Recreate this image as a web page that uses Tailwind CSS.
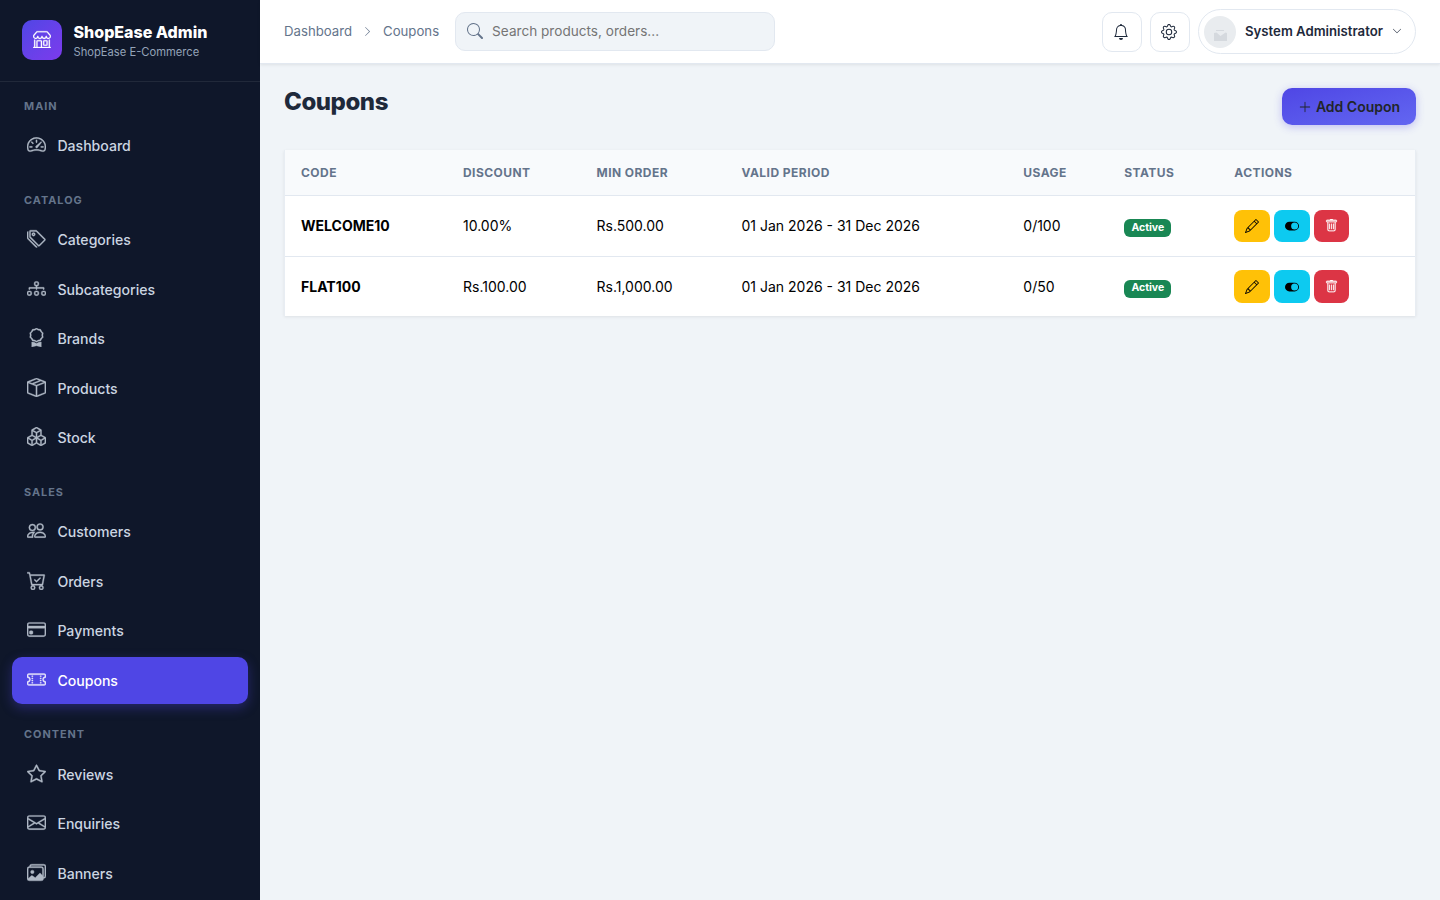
<!DOCTYPE html>
<html lang="en">

<head>
    <meta charset="UTF-8" />
    <meta name="viewport" content="width=device-width, initial-scale=1.0" />
    <title>Coupons - ShopEase Admin</title>
    <script src="https://cdn.jsdelivr.net/npm/@tailwindcss/browser@4"></script>
</head>

<body class="font-['Inter',sans-serif] bg-[#f0f4f8] h-screen overflow-hidden">
    <!-- Icon sprite -->
    <svg class="hidden" xmlns="http://www.w3.org/2000/svg">
        <symbol id="shop" viewBox="0 0 16 16"><path d="M2.97 1.35A1 1 0 0 1 3.73 1h8.54a1 1 0 0 1 .76.35l2.609 3.044A1.5 1.5 0 0 1 16 5.37v.255a2.375 2.375 0 0 1-4.25 1.458A2.37 2.37 0 0 1 9.875 8 2.37 2.37 0 0 1 8 7.083 2.37 2.37 0 0 1 6.125 8a2.37 2.37 0 0 1-1.875-.917A2.375 2.375 0 0 1 0 5.625V5.37a1.5 1.5 0 0 1 .361-.976zm1.78 4.275a1.375 1.375 0 0 0 2.75 0 .5.5 0 0 1 1 0 1.375 1.375 0 0 0 2.75 0 .5.5 0 0 1 1 0 1.375 1.375 0 1 0 2.75 0V5.37a.5.5 0 0 0-.12-.325L12.27 2H3.73L1.12 5.045A.5.5 0 0 0 1 5.37v.255a1.375 1.375 0 0 0 2.75 0 .5.5 0 0 1 1 0M1.5 8.5A.5.5 0 0 1 2 9v6h1v-5a1 1 0 0 1 1-1h3a1 1 0 0 1 1 1v5h6V9a.5.5 0 0 1 1 0v6h.5a.5.5 0 0 1 0 1H.5a.5.5 0 0 1 0-1H1V9a.5.5 0 0 1 .5-.5M4 15h3v-5H4zm5-5a1 1 0 0 1 1-1h2a1 1 0 0 1 1 1v3a1 1 0 0 1-1 1h-2a1 1 0 0 1-1-1zm3 0h-2v3h2z" /></symbol>
        <symbol id="speedometer" viewBox="0 0 16 16"><path d="M8 4a.5.5 0 0 1 .5.5V6a.5.5 0 0 1-1 0V4.5A.5.5 0 0 1 8 4M3.732 5.732a.5.5 0 0 1 .707 0l.915.914a.5.5 0 1 1-.708.708l-.914-.915a.5.5 0 0 1 0-.707M2 10a.5.5 0 0 1 .5-.5h1.586a.5.5 0 0 1 0 1H2.5A.5.5 0 0 1 2 10m9.5 0a.5.5 0 0 1 .5-.5h1.5a.5.5 0 0 1 0 1H12a.5.5 0 0 1-.5-.5m.754-4.246a.39.39 0 0 0-.527-.02L7.547 9.31a.91.91 0 1 0 1.302 1.258l3.434-4.297a.39.39 0 0 0-.029-.518z" /><path fill-rule="evenodd" d="M0 10a8 8 0 1 1 15.547 2.661c-.442 1.253-1.845 1.602-2.932 1.25C11.309 13.488 9.475 13 8 13c-1.474 0-3.31.488-4.615.911-1.087.352-2.49.003-2.932-1.25A8 8 0 0 1 0 10m8-7a7 7 0 0 0-6.603 9.329c.203.575.923.876 1.68.63C4.397 12.533 6.358 12 8 12s3.604.532 4.923.96c.757.245 1.477-.056 1.68-.631A7 7 0 0 0 8 3" /></symbol>
        <symbol id="tags" viewBox="0 0 16 16"><path d="M3 2v4.586l7 7L14.586 9l-7-7zM2 2a1 1 0 0 1 1-1h4.586a1 1 0 0 1 .707.293l7 7a1 1 0 0 1 0 1.414l-4.586 4.586a1 1 0 0 1-1.414 0l-7-7A1 1 0 0 1 2 6.586z" /><path d="M5.5 5a.5.5 0 1 1 0-1 .5.5 0 0 1 0 1m0 1a1.5 1.5 0 1 0 0-3 1.5 1.5 0 0 0 0 3M1 7.086a1 1 0 0 0 .293.707L8.75 15.25l-.043.043a1 1 0 0 1-1.414 0l-7-7A1 1 0 0 1 0 7.586V3a1 1 0 0 1 1-1z" /></symbol>
        <symbol id="diagram" viewBox="0 0 16 16"><path fill-rule="evenodd" d="M6 3.5A1.5 1.5 0 0 1 7.5 2h1A1.5 1.5 0 0 1 10 3.5v1A1.5 1.5 0 0 1 8.5 6v1H14a.5.5 0 0 1 .5.5v1a.5.5 0 0 1-1 0V8h-5v.5a.5.5 0 0 1-1 0V8h-5v.5a.5.5 0 0 1-1 0v-1A.5.5 0 0 1 2 7h5.5V6A1.5 1.5 0 0 1 6 4.5zM8.5 5a.5.5 0 0 0 .5-.5v-1a.5.5 0 0 0-.5-.5h-1a.5.5 0 0 0-.5.5v1a.5.5 0 0 0 .5.5zM0 11.5A1.5 1.5 0 0 1 1.5 10h1A1.5 1.5 0 0 1 4 11.5v1A1.5 1.5 0 0 1 2.5 14h-1A1.5 1.5 0 0 1 0 12.5zm1.5-.5a.5.5 0 0 0-.5.5v1a.5.5 0 0 0 .5.5h1a.5.5 0 0 0 .5-.5v-1a.5.5 0 0 0-.5-.5zm4.5.5A1.5 1.5 0 0 1 7.5 10h1a1.5 1.5 0 0 1 1.5 1.5v1A1.5 1.5 0 0 1 8.5 14h-1A1.5 1.5 0 0 1 6 12.5zm1.5-.5a.5.5 0 0 0-.5.5v1a.5.5 0 0 0 .5.5h1a.5.5 0 0 0 .5-.5v-1a.5.5 0 0 0-.5-.5zm4.5.5a1.5 1.5 0 0 1 1.5-1.5h1a1.5 1.5 0 0 1 1.5 1.5v1a1.5 1.5 0 0 1-1.5 1.5h-1a1.5 1.5 0 0 1-1.5-1.5zm1.5-.5a.5.5 0 0 0-.5.5v1a.5.5 0 0 0 .5.5h1a.5.5 0 0 0 .5-.5v-1a.5.5 0 0 0-.5-.5z" /></symbol>
        <symbol id="award" viewBox="0 0 16 16"><path d="M9.669.864 8 0 6.331.864l-1.858.282-.842 1.68-1.337 1.32L2.6 6l-.306 1.854 1.337 1.32.842 1.68 1.858.282L8 12l1.669-.864 1.858-.282.842-1.68 1.337-1.32L13.4 6l.306-1.854-1.337-1.32-.842-1.68zm1.196 1.193.684 1.365 1.086 1.072L12.387 6l.248 1.506-1.086 1.072-.684 1.365-1.51.229L8 10.874l-1.355-.702-1.51-.229-.684-1.365-1.086-1.072L3.614 6l-.25-1.506 1.087-1.072.684-1.365 1.51-.229L8 1.126l1.356.702z" /><path d="M4 11.794V16l4-1 4 1v-4.206l-2.018.306L8 13.126 6.018 12.1z" /></symbol>
        <symbol id="box" viewBox="0 0 16 16"><path d="M8.186 1.113a.5.5 0 0 0-.372 0L1.846 3.5l2.404.961L10.404 2zm3.564 1.426L5.596 5 8 5.961 14.154 3.5zm3.25 1.7-6.5 2.6v7.922l6.5-2.6V4.24zM7.5 14.762V6.838L1 4.239v7.923zM7.443.184a1.5 1.5 0 0 1 1.114 0l7.129 2.852A.5.5 0 0 1 16 3.5v8.662a1 1 0 0 1-.629.928l-7.185 2.874a.5.5 0 0 1-.372 0L.63 13.09a1 1 0 0 1-.63-.928V3.5a.5.5 0 0 1 .314-.464z" /></symbol>
        <symbol id="boxes" viewBox="0 0 16 16"><path d="M7.752.066a.5.5 0 0 1 .496 0l3.75 2.143a.5.5 0 0 1 .252.434v3.995l3.498 2A.5.5 0 0 1 16 9.07v4.286a.5.5 0 0 1-.252.434l-3.75 2.143a.5.5 0 0 1-.496 0l-3.502-2-3.502 2.001a.5.5 0 0 1-.496 0l-3.75-2.143A.5.5 0 0 1 0 13.357V9.071a.5.5 0 0 1 .252-.434L3.75 6.638V2.643a.5.5 0 0 1 .252-.434zM4.25 7.504 1.508 9.071l2.742 1.567 2.742-1.567zM7.5 9.933l-2.75 1.571v3.134l2.75-1.571zm1 3.134 2.75 1.571v-3.134L8.5 9.933zm.508-3.996 2.742 1.567 2.742-1.567-2.742-1.567zm2.242-2.433V3.504L8.5 5.076V8.21zM7.5 8.21V5.076L4.75 3.504v3.134zM5.258 2.643 8 4.21l2.742-1.567L8 1.076zM15 9.933l-2.75 1.571v3.134L15 13.067zM3.75 14.638v-3.134L1 9.933v3.134z" /></symbol>
        <symbol id="people" viewBox="0 0 16 16"><path d="M15 14s1 0 1-1-1-4-5-4-5 3-5 4 1 1 1 1zm-7.978-1L7 12.996c.001-.264.167-1.03.76-1.72C8.312 10.629 9.282 10 11 10c1.717 0 2.687.63 3.24 1.276.593.69.758 1.457.76 1.72l-.008.002-.014.002zM11 7a2 2 0 1 0 0-4 2 2 0 0 0 0 4m3-2a3 3 0 1 1-6 0 3 3 0 0 1 6 0M6.936 9.28a6 6 0 0 0-1.23-.247A7 7 0 0 0 5 9c-4 0-5 3-5 4q0 1 1 1h4.216A2.24 2.24 0 0 1 5 13c0-1.01.377-2.042 1.09-2.904.243-.294.526-.569.846-.816M4.92 10A5.5 5.5 0 0 0 4 13H1c0-.26.164-1.03.76-1.724.545-.636 1.492-1.256 3.16-1.275ZM1.5 5.5a3 3 0 1 1 6 0 3 3 0 0 1-6 0m3-2a2 2 0 1 0 0 4 2 2 0 0 0 0-4" /></symbol>
        <symbol id="cart" viewBox="0 0 16 16"><path d="M11.354 6.354a.5.5 0 0 0-.708-.708L8 8.293 6.854 7.146a.5.5 0 1 0-.708.708l1.5 1.5a.5.5 0 0 0 .708 0z" /><path d="M.5 1a.5.5 0 0 0 0 1h1.11l.401 1.607 1.498 7.985A.5.5 0 0 0 4 12h1a2 2 0 1 0 0 4 2 2 0 0 0 0-4h7a2 2 0 1 0 0 4 2 2 0 0 0 0-4h1a.5.5 0 0 0 .491-.408l1.5-8A.5.5 0 0 0 14.5 3H2.89l-.405-1.621A.5.5 0 0 0 2 1zm3.915 10L3.102 4h10.796l-1.313 7zM6 14a1 1 0 1 1-2 0 1 1 0 0 1 2 0m7 0a1 1 0 1 1-2 0 1 1 0 0 1 2 0" /></symbol>
        <symbol id="card" viewBox="0 0 16 16"><path d="M0 4a2 2 0 0 1 2-2h12a2 2 0 0 1 2 2v8a2 2 0 0 1-2 2H2a2 2 0 0 1-2-2zm2-1a1 1 0 0 0-1 1v1h14V4a1 1 0 0 0-1-1zm13 4H1v5a1 1 0 0 0 1 1h12a1 1 0 0 0 1-1z" /><path d="M2 10a1 1 0 0 1 1-1h1a1 1 0 0 1 1 1v1a1 1 0 0 1-1 1H3a1 1 0 0 1-1-1z" /></symbol>
        <symbol id="ticket" viewBox="0 0 16 16"><path d="M4 4.85v.9h1v-.9zm7 0v.9h1v-.9zm-7 1.8v.9h1v-.9zm7 0v.9h1v-.9zm-7 1.8v.9h1v-.9zm7 0v.9h1v-.9zm-7 1.8v.9h1v-.9zm7 0v.9h1v-.9z" /><path d="M1.5 3A1.5 1.5 0 0 0 0 4.5V6a.5.5 0 0 0 .5.5 1.5 1.5 0 1 1 0 3 .5.5 0 0 0-.5.5v1.5A1.5 1.5 0 0 0 1.5 13h13a1.5 1.5 0 0 0 1.5-1.5V10a.5.5 0 0 0-.5-.5 1.5 1.5 0 0 1 0-3A.5.5 0 0 0 16 6V4.5A1.5 1.5 0 0 0 14.5 3zM1 4.5a.5.5 0 0 1 .5-.5h13a.5.5 0 0 1 .5.5v1.05a2.5 2.5 0 0 0 0 4.9v1.05a.5.5 0 0 1-.5.5h-13a.5.5 0 0 1-.5-.5v-1.05a2.5 2.5 0 0 0 0-4.9z" /></symbol>
        <symbol id="star" viewBox="0 0 16 16"><path d="M2.866 14.85c-.078.444.36.791.746.593l4.39-2.256 4.389 2.256c.386.198.824-.149.746-.592l-.83-4.73 3.522-3.356c.33-.314.16-.888-.282-.95l-4.898-.696L8.465.792a.513.513 0 0 0-.927 0L5.354 5.12l-4.898.696c-.441.062-.612.636-.283.95l3.523 3.356-.83 4.73zm4.905-2.767-3.686 1.894.694-3.957a.56.56 0 0 0-.163-.505L1.71 6.745l4.052-.576a.53.53 0 0 0 .393-.288L8 2.223l1.847 3.658a.53.53 0 0 0 .393.288l4.052.575-2.906 2.77a.56.56 0 0 0-.163.506l.694 3.957-3.686-1.894a.5.5 0 0 0-.461 0z" /></symbol>
        <symbol id="envelope" viewBox="0 0 16 16"><path d="M0 4a2 2 0 0 1 2-2h12a2 2 0 0 1 2 2v8a2 2 0 0 1-2 2H2a2 2 0 0 1-2-2zm2-1a1 1 0 0 0-1 1v.217l7 4.2 7-4.2V4a1 1 0 0 0-1-1zm13 2.383-4.708 2.825L15 11.105zm-.034 6.876-5.64-3.471L8 9.583l-1.326-.795-5.64 3.47A1 1 0 0 0 2 13h12a1 1 0 0 0 .966-.741M1 11.105l4.708-2.897L1 5.383z" /></symbol>
        <symbol id="images" viewBox="0 0 16 16"><path d="M4.502 9a1.5 1.5 0 1 0 0-3 1.5 1.5 0 0 0 0 3" /><path d="M14.002 13a2 2 0 0 1-2 2h-10a2 2 0 0 1-2-2V5A2 2 0 0 1 2 3a2 2 0 0 1 2-2h10a2 2 0 0 1 2 2v8a2 2 0 0 1-1.998 2M14 2H4a1 1 0 0 0-1 1h9.002a2 2 0 0 1 2 2v7A1 1 0 0 0 15 11V3a1 1 0 0 0-1-1M2.002 4a1 1 0 0 0-1 1v8l2.646-2.354a.5.5 0 0 1 .63-.062l2.66 1.773 3.71-3.71a.5.5 0 0 1 .577-.094l1.777 1.947V5a1 1 0 0 0-1-1z" /></symbol>
        <symbol id="search" viewBox="0 0 16 16"><path d="M11.742 10.344a6.5 6.5 0 1 0-1.397 1.398h-.001q.044.06.098.115l3.85 3.85a1 1 0 0 0 1.415-1.414l-3.85-3.85a1 1 0 0 0-.115-.1zM12 6.5a5.5 5.5 0 1 1-11 0 5.5 5.5 0 0 1 11 0" /></symbol>
        <symbol id="bell" viewBox="0 0 16 16"><path d="M8 16a2 2 0 0 0 2-2H6a2 2 0 0 0 2 2M8 1.918l-.797.161A4 4 0 0 0 4 6c0 .628-.134 2.197-.459 3.742-.16.767-.376 1.566-.663 2.258h10.244c-.287-.692-.502-1.49-.663-2.258C12.134 8.197 12 6.628 12 6a4 4 0 0 0-3.203-3.92zM14.22 12c.223.447.481.801.78 1H1c.299-.199.557-.553.78-1C2.68 10.2 3 6.88 3 6c0-2.42 1.72-4.44 4.005-4.901a1 1 0 1 1 1.99 0A5 5 0 0 1 13 6c0 .88.32 4.2 1.22 6" /></symbol>
        <symbol id="gear" viewBox="0 0 16 16"><path d="M8 4.754a3.246 3.246 0 1 0 0 6.492 3.246 3.246 0 0 0 0-6.492M5.754 8a2.246 2.246 0 1 1 4.492 0 2.246 2.246 0 0 1-4.492 0" /><path d="M9.796 1.343c-.527-1.79-3.065-1.79-3.592 0l-.094.319a.873.873 0 0 1-1.255.52l-.292-.16c-1.64-.892-3.433.902-2.54 2.541l.159.292a.873.873 0 0 1-.52 1.255l-.319.094c-1.79.527-1.79 3.065 0 3.592l.319.094a.873.873 0 0 1 .52 1.255l-.16.292c-.892 1.64.901 3.434 2.541 2.54l.292-.159a.873.873 0 0 1 1.255.52l.094.319c.527 1.79 3.065 1.79 3.592 0l.094-.319a.873.873 0 0 1 1.255-.52l.292.16c1.64.893 3.434-.902 2.54-2.541l-.159-.292a.873.873 0 0 1 .52-1.255l.319-.094c1.79-.527 1.79-3.065 0-3.592l-.319-.094a.873.873 0 0 1-.52-1.255l.16-.292c.893-1.64-.902-3.433-2.541-2.54l-.292.159a.873.873 0 0 1-1.255-.52zm-2.633.283c.246-.835 1.428-.835 1.674 0l.094.319a1.873 1.873 0 0 0 2.693 1.115l.291-.16c.764-.415 1.6.42 1.184 1.185l-.159.292a1.873 1.873 0 0 0 1.116 2.692l.318.094c.835.246.835 1.428 0 1.674l-.319.094a1.873 1.873 0 0 0-1.115 2.693l.16.291c.415.764-.42 1.6-1.185 1.184l-.291-.159a1.873 1.873 0 0 0-2.693 1.116l-.094.318c-.246.835-1.428.835-1.674 0l-.094-.319a1.873 1.873 0 0 0-2.692-1.115l-.292.16c-.764.415-1.6-.42-1.184-1.185l.159-.291A1.873 1.873 0 0 0 1.945 8.93l-.319-.094c-.835-.246-.835-1.428 0-1.674l.319-.094A1.873 1.873 0 0 0 3.06 4.377l-.16-.292c-.415-.764.42-1.6 1.185-1.184l.292.159a1.873 1.873 0 0 0 2.692-1.115z" /></symbol>
        <symbol id="chevron-right" viewBox="0 0 16 16"><path d="M4.646 1.646a.5.5 0 0 1 .708 0l6 6a.5.5 0 0 1 0 .708l-6 6a.5.5 0 0 1-.708-.708L10.293 8 4.646 2.354a.5.5 0 0 1 0-.708" /></symbol>
        <symbol id="chevron-down" viewBox="0 0 16 16"><path d="M1.646 4.646a.5.5 0 0 1 .708 0L8 10.293l5.646-5.647a.5.5 0 0 1 .708.708l-6 6a.5.5 0 0 1-.708 0l-6-6a.5.5 0 0 1 0-.708" /></symbol>
        <symbol id="plus" viewBox="0 0 16 16"><path d="M8 2a.5.5 0 0 1 .5.5v5h5a.5.5 0 0 1 0 1h-5v5a.5.5 0 0 1-1 0v-5h-5a.5.5 0 0 1 0-1h5v-5A.5.5 0 0 1 8 2" /></symbol>
        <symbol id="pencil" viewBox="0 0 16 16"><path d="M12.146.146a.5.5 0 0 1 .708 0l3 3a.5.5 0 0 1 0 .708l-10 10a.5.5 0 0 1-.168.11l-5 2a.5.5 0 0 1-.65-.65l2-5a.5.5 0 0 1 .11-.168zM11.207 2.5 13.5 4.793 14.793 3.5 12.5 1.207zm1.586 3L10.5 3.207 4 9.707V10h.5a.5.5 0 0 1 .5.5v.5h.5a.5.5 0 0 1 .5.5v.5h.293zm-9.761 5.175-.106.106-1.528 3.821 3.821-1.528.106-.106A.5.5 0 0 1 5 12.5V12h-.5a.5.5 0 0 1-.5-.5V11h-.5a.5.5 0 0 1-.468-.325" /></symbol>
        <symbol id="toggle" viewBox="0 0 16 16"><path d="M5 3a5 5 0 0 0 0 10h6a5 5 0 0 0 0-10zm6 9a4 4 0 1 1 0-8 4 4 0 0 1 0 8" /></symbol>
        <symbol id="trash" viewBox="0 0 16 16"><path d="M5.5 5.5A.5.5 0 0 1 6 6v6a.5.5 0 0 1-1 0V6a.5.5 0 0 1 .5-.5m2.5 0a.5.5 0 0 1 .5.5v6a.5.5 0 0 1-1 0V6a.5.5 0 0 1 .5-.5m3 .5a.5.5 0 0 0-1 0v6a.5.5 0 0 0 1 0z" /><path d="M14.5 3a1 1 0 0 1-1 1H13v9a2 2 0 0 1-2 2H5a2 2 0 0 1-2-2V4h-.5a1 1 0 0 1-1-1V2a1 1 0 0 1 1-1H6a1 1 0 0 1 1-1h2a1 1 0 0 1 1 1h3.5a1 1 0 0 1 1 1zM4.118 4 4 4.059V13a1 1 0 0 0 1 1h6a1 1 0 0 0 1-1V4.059L11.882 4zM2.5 3h11V2h-11z" /></symbol>
    </svg>

    <div class="flex h-screen">
        <!-- Sidebar -->
        <aside class="w-[260px] shrink-0 h-screen overflow-hidden bg-[#0f172a] flex flex-col">
            <div class="h-[82px] shrink-0 flex items-center gap-[11.5px] pl-[22px] pb-px border-b border-white/8">
                <div class="w-10 h-10 rounded-[10px] bg-gradient-to-br from-[#4f46e5] to-[#7c3aed] text-white flex items-center justify-center">
                    <svg class="w-[18px] h-[18px] -mt-[3px] fill-current stroke-current stroke-[0.2]"><use href="#shop" /></svg>
                </div>
                <div class="pt-1">
                    <div class="text-white text-base leading-5 font-extrabold">ShopEase Admin</div>
                    <div class="text-[#94a3b8] text-[11.2px] leading-[20px]">ShopEase E-Commerce</div>
                </div>
            </div>

            <nav class="px-3 text-[14.08px] font-medium text-[#cbd5e1]">
                <div class="h-[40.5px] pt-[15px] pl-3 text-[10.88px] leading-[18px] font-bold tracking-[1px] text-[#64748b]">MAIN</div>
                <a href="#" class="flex items-center gap-[11.5px] h-[47px] mb-[2.5px] pl-[14.9px] rounded-[10px]"><svg class="w-[19px] h-[19px] -mt-[3px] fill-current stroke-current stroke-[0.3] opacity-85 overflow-visible"><use href="#speedometer" /></svg>Dashboard</a>

                <div class="h-[44.5px] pt-[18.6px] pl-3 text-[10.88px] leading-[18px] font-bold tracking-[1px] text-[#64748b]">CATALOG</div>
                <a href="#" class="flex items-center gap-[11.5px] h-[47px] mb-[2.5px] pl-[14.9px] rounded-[10px]"><svg class="w-[19px] h-[19px] -mt-[3px] fill-current stroke-current stroke-[0.3] opacity-85 overflow-visible"><use href="#tags" /></svg>Categories</a>
                <a href="#" class="flex items-center gap-[11.5px] h-[47px] mb-[2.5px] pl-[14.9px] rounded-[10px]"><svg class="w-[19px] h-[19px] -mt-[3px] fill-current stroke-current stroke-[0.3] opacity-85 overflow-visible"><use href="#diagram" /></svg>Subcategories</a>
                <a href="#" class="flex items-center gap-[11.5px] h-[47px] mb-[2.5px] pl-[14.9px] rounded-[10px]"><svg class="w-[19px] h-[19px] -mt-[3px] fill-current stroke-current stroke-[0.3] opacity-85 overflow-visible"><use href="#award" /></svg>Brands</a>
                <a href="#" class="flex items-center gap-[11.5px] h-[47px] mb-[2.5px] pl-[14.9px] rounded-[10px]"><svg class="w-[19px] h-[19px] -mt-[3px] fill-current stroke-current stroke-[0.3] opacity-85 overflow-visible"><use href="#box" /></svg>Products</a>
                <a href="#" class="flex items-center gap-[11.5px] h-[47px] mb-[2.5px] pl-[14.9px] rounded-[10px]"><svg class="w-[19px] h-[19px] -mt-[3px] fill-current stroke-current stroke-[0.3] opacity-85 overflow-visible"><use href="#boxes" /></svg>Stock</a>

                <div class="h-[44.5px] pt-[18.6px] pl-3 text-[10.88px] leading-[18px] font-bold tracking-[1px] text-[#64748b]">SALES</div>
                <a href="#" class="flex items-center gap-[11.5px] h-[47px] mb-[2.5px] pl-[14.9px] rounded-[10px]"><svg class="w-[19px] h-[19px] -mt-[3px] fill-current stroke-current stroke-[0.3] opacity-85 overflow-visible"><use href="#people" /></svg>Customers</a>
                <a href="#" class="flex items-center gap-[11.5px] h-[47px] mb-[2.5px] pl-[14.9px] rounded-[10px]"><svg class="w-[19px] h-[19px] -mt-[3px] fill-current stroke-current stroke-[0.3] opacity-85 overflow-visible"><use href="#cart" /></svg>Orders</a>
                <a href="#" class="flex items-center gap-[11.5px] h-[47px] mb-[2.5px] pl-[14.9px] rounded-[10px]"><svg class="w-[19px] h-[19px] -mt-[3px] fill-current stroke-current stroke-[0.3] opacity-85 overflow-visible"><use href="#card" /></svg>Payments</a>
                <a href="#" class="flex items-center gap-[11.5px] h-[47px] mb-[2.5px] pl-[14.9px] rounded-[10px] bg-[#4f46e5] text-white shadow-[0_4px_12px_rgba(79,70,229,0.35)]"><svg class="w-[19px] h-[19px] -mt-[3px] fill-current stroke-current stroke-[0.3] opacity-85 overflow-visible"><use href="#ticket" /></svg>Coupons</a>

                <div class="h-[44.5px] pt-[18px] pl-3 text-[10.88px] leading-[18px] font-bold tracking-[1px] text-[#64748b]">CONTENT</div>
                <a href="#" class="flex items-center gap-[11.5px] h-[47px] mb-[2.5px] pl-[14.9px] rounded-[10px]"><svg class="w-[19px] h-[19px] -mt-[3px] fill-current stroke-current stroke-[0.3] opacity-85 overflow-visible"><use href="#star" /></svg>Reviews</a>
                <a href="#" class="flex items-center gap-[11.5px] h-[47px] mb-[2.5px] pl-[14.9px] rounded-[10px]"><svg class="w-[19px] h-[19px] -mt-[3px] fill-current stroke-current stroke-[0.3] opacity-85 overflow-visible"><use href="#envelope" /></svg>Enquiries</a>
                <a href="#" class="flex items-center gap-[11.5px] h-[47px] mb-[2.5px] pl-[14.9px] rounded-[10px]"><svg class="w-[19px] h-[19px] -mt-[3px] fill-current stroke-current stroke-[0.3] opacity-85 overflow-visible"><use href="#images" /></svg>Banners</a>
            </nav>
        </aside>

        <div class="flex-1 flex flex-col">
            <!-- Topbar -->
            <header class="h-16 shrink-0 px-6 pb-px bg-white border-b border-[#e2e8f0] shadow-[0_1px_3px_rgba(0,0,0,0.08)] flex items-center justify-between">
                <div class="flex items-center">
                    <div class="flex items-center text-[13.2px] text-[#64748b]">
                        <span class="pt-0.5">Dashboard</span>
                        <svg class="w-[11px] h-[11px] mt-px mx-[10px] fill-current"><use href="#chevron-right" /></svg>
                        <span class="pt-0.5">Coupons</span>
                    </div>
                    <div class="ml-4 w-80 h-[39px] rounded-[10px] border border-[#e2e8f0] bg-[#f0f4f8] flex items-center pl-[11px]">
                        <svg class="w-4 h-4 mr-[9px] fill-[#64748b]"><use href="#search" /></svg>
                        <span class="text-[13.6px] text-[#757575]">Search products, orders...</span>
                    </div>
                </div>
                <div class="flex items-center gap-2 text-[#1e293b]">
                    <button class="w-10 h-10 mt-px rounded-[10px] border border-[#e2e8f0] flex items-center justify-center"><svg class="w-4 h-4 -ml-0.5 fill-current"><use href="#bell" /></svg></button>
                    <button class="w-10 h-10 mt-px rounded-[10px] border border-[#e2e8f0] flex items-center justify-center"><svg class="w-4 h-4 -ml-0.5 fill-current"><use href="#gear" /></svg></button>
                    <button class="w-[218px] h-[45px] rounded-full border border-[#e2e8f0] flex items-center pl-[5px]">
                        <svg class="w-8 h-8 mt-px mr-[9px]" viewBox="0 0 32 32">
                            <circle cx="16" cy="16" r="16" fill="#e9ecef" />
                            <path d="M12 14h8v1h-8z" fill="#d5d9de" />
                            <path d="M10 17l2.500-.5 4 3.500 5-3.500 1.500.5v8H10z" fill="#d5d9de" />
                        </svg>
                        <span class="pt-0.5 text-[13.2px] font-semibold">System Administrator</span>
                        <svg class="w-[10px] h-[10px] ml-[9px] fill-current"><use href="#chevron-down" /></svg>
                    </button>
                </div>
            </header>

            <main class="px-6 pt-6">
                <div class="flex justify-between items-start h-[62px]">
                    <h1 class="text-2xl leading-[27px] font-extrabold tracking-[-0.45px] text-[#1e293b]">Coupons</h1>
                    <button class="w-[134px] h-[37px] rounded-[10px] bg-gradient-to-br from-[#4f46e5] to-[#6366f1] text-[#212529] text-sm font-semibold flex items-center justify-center gap-1 shadow-[0_2px_8px_rgba(79,70,229,0.3)]">
                        <svg class="w-[14px] h-[14px] fill-current"><use href="#plus" /></svg>Add Coupon
                    </button>
                </div>

                <div class="border-x border-[#e8edf3] bg-white shadow-[0_1px_3px_rgba(0,0,0,0.08)]">
                    <table class="w-full table-fixed text-left text-sm text-black">
                        <colgroup>
                            <col class="w-[162px]" />
                            <col class="w-[133.5px]" />
                            <col class="w-[145px]" />
                            <col class="w-[281.8px]" />
                            <col class="w-[101px]" />
                            <col class="w-[110px]" />
                            <col />
                        </colgroup>
                        <thead>
                            <tr class="h-[45px] bg-[#f8fafc] border-b border-[#e2e8f0] text-xs tracking-[0.45px] text-[#64748b]">
                                <th class="pl-4 pt-px font-bold">CODE</th>
                                <th class="pl-4 pt-px font-bold">DISCOUNT</th>
                                <th class="pl-4 pt-px font-bold">MIN ORDER</th>
                                <th class="pl-4 pt-px font-bold">VALID PERIOD</th>
                                <th class="pl-4 pt-px font-bold">USAGE</th>
                                <th class="pl-4 pt-px font-bold">STATUS</th>
                                <th class="pl-4 pt-px font-bold">ACTIONS</th>
                            </tr>
                        </thead>
                        <tbody>
                            <tr class="h-[61px] border-b border-[#e2e8f0]">
                                <td class="pl-4 font-bold">WELCOME10</td>
                                <td class="pl-4">10.00%</td>
                                <td class="pl-4">Rs.500.00</td>
                                <td class="pl-4">01 Jan 2026 - 31 Dec 2026</td>
                                <td class="pl-4">0/100</td>
                                <td class="pl-4"><span class="flex items-center justify-center w-[47px] h-[18px] mt-[5px] pb-px rounded-md bg-[#198754] text-white text-[10.5px] font-bold">Active</span></td>
                                <td class="pl-4">
                                    <div class="flex gap-1">
                                        <button class="w-9 h-8 rounded-lg bg-[#ffc107] flex items-center justify-center"><svg class="w-[14px] h-[14px]"><use href="#pencil" /></svg></button>
                                        <button class="w-9 h-8 rounded-lg bg-[#0dcaf0] flex items-center justify-center"><svg class="w-[14px] h-[14px]"><use href="#toggle" /></svg></button>
                                        <button class="w-[35px] h-8 rounded-lg bg-[#dc3545] flex items-center justify-center"><svg class="w-[13px] h-[13px] -mt-px fill-white stroke-white stroke-[0.3]"><use href="#trash" /></svg></button>
                                    </div>
                                </td>
                            </tr>
                            <tr class="h-[60px]">
                                <td class="pl-4 pt-0.5 font-bold">FLAT100</td>
                                <td class="pl-4 pt-0.5">Rs.100.00</td>
                                <td class="pl-4 pt-0.5">Rs.1,000.00</td>
                                <td class="pl-4 pt-0.5">01 Jan 2026 - 31 Dec 2026</td>
                                <td class="pl-4 pt-0.5">0/50</td>
                                <td class="pl-4"><span class="flex items-center justify-center w-[47px] h-[18px] mt-[5px] pb-0.5 rounded-md bg-[#198754] text-white text-[10.5px] font-bold">Active</span></td>
                                <td class="pl-4">
                                    <div class="flex gap-1">
                                        <button class="w-9 h-[33px] pt-px rounded-lg bg-[#ffc107] flex items-center justify-center"><svg class="w-[14px] h-[14px]"><use href="#pencil" /></svg></button>
                                        <button class="w-9 h-[33px] pt-px rounded-lg bg-[#0dcaf0] flex items-center justify-center"><svg class="w-[14px] h-[14px]"><use href="#toggle" /></svg></button>
                                        <button class="w-[35px] h-[33px] pt-px rounded-lg bg-[#dc3545] flex items-center justify-center"><svg class="w-[13px] h-[13px] -mt-px fill-white stroke-white stroke-[0.3]"><use href="#trash" /></svg></button>
                                    </div>
                                </td>
                            </tr>
                        </tbody>
                    </table>
                </div>
            </main>
        </div>
    </div>
</body>

</html>
